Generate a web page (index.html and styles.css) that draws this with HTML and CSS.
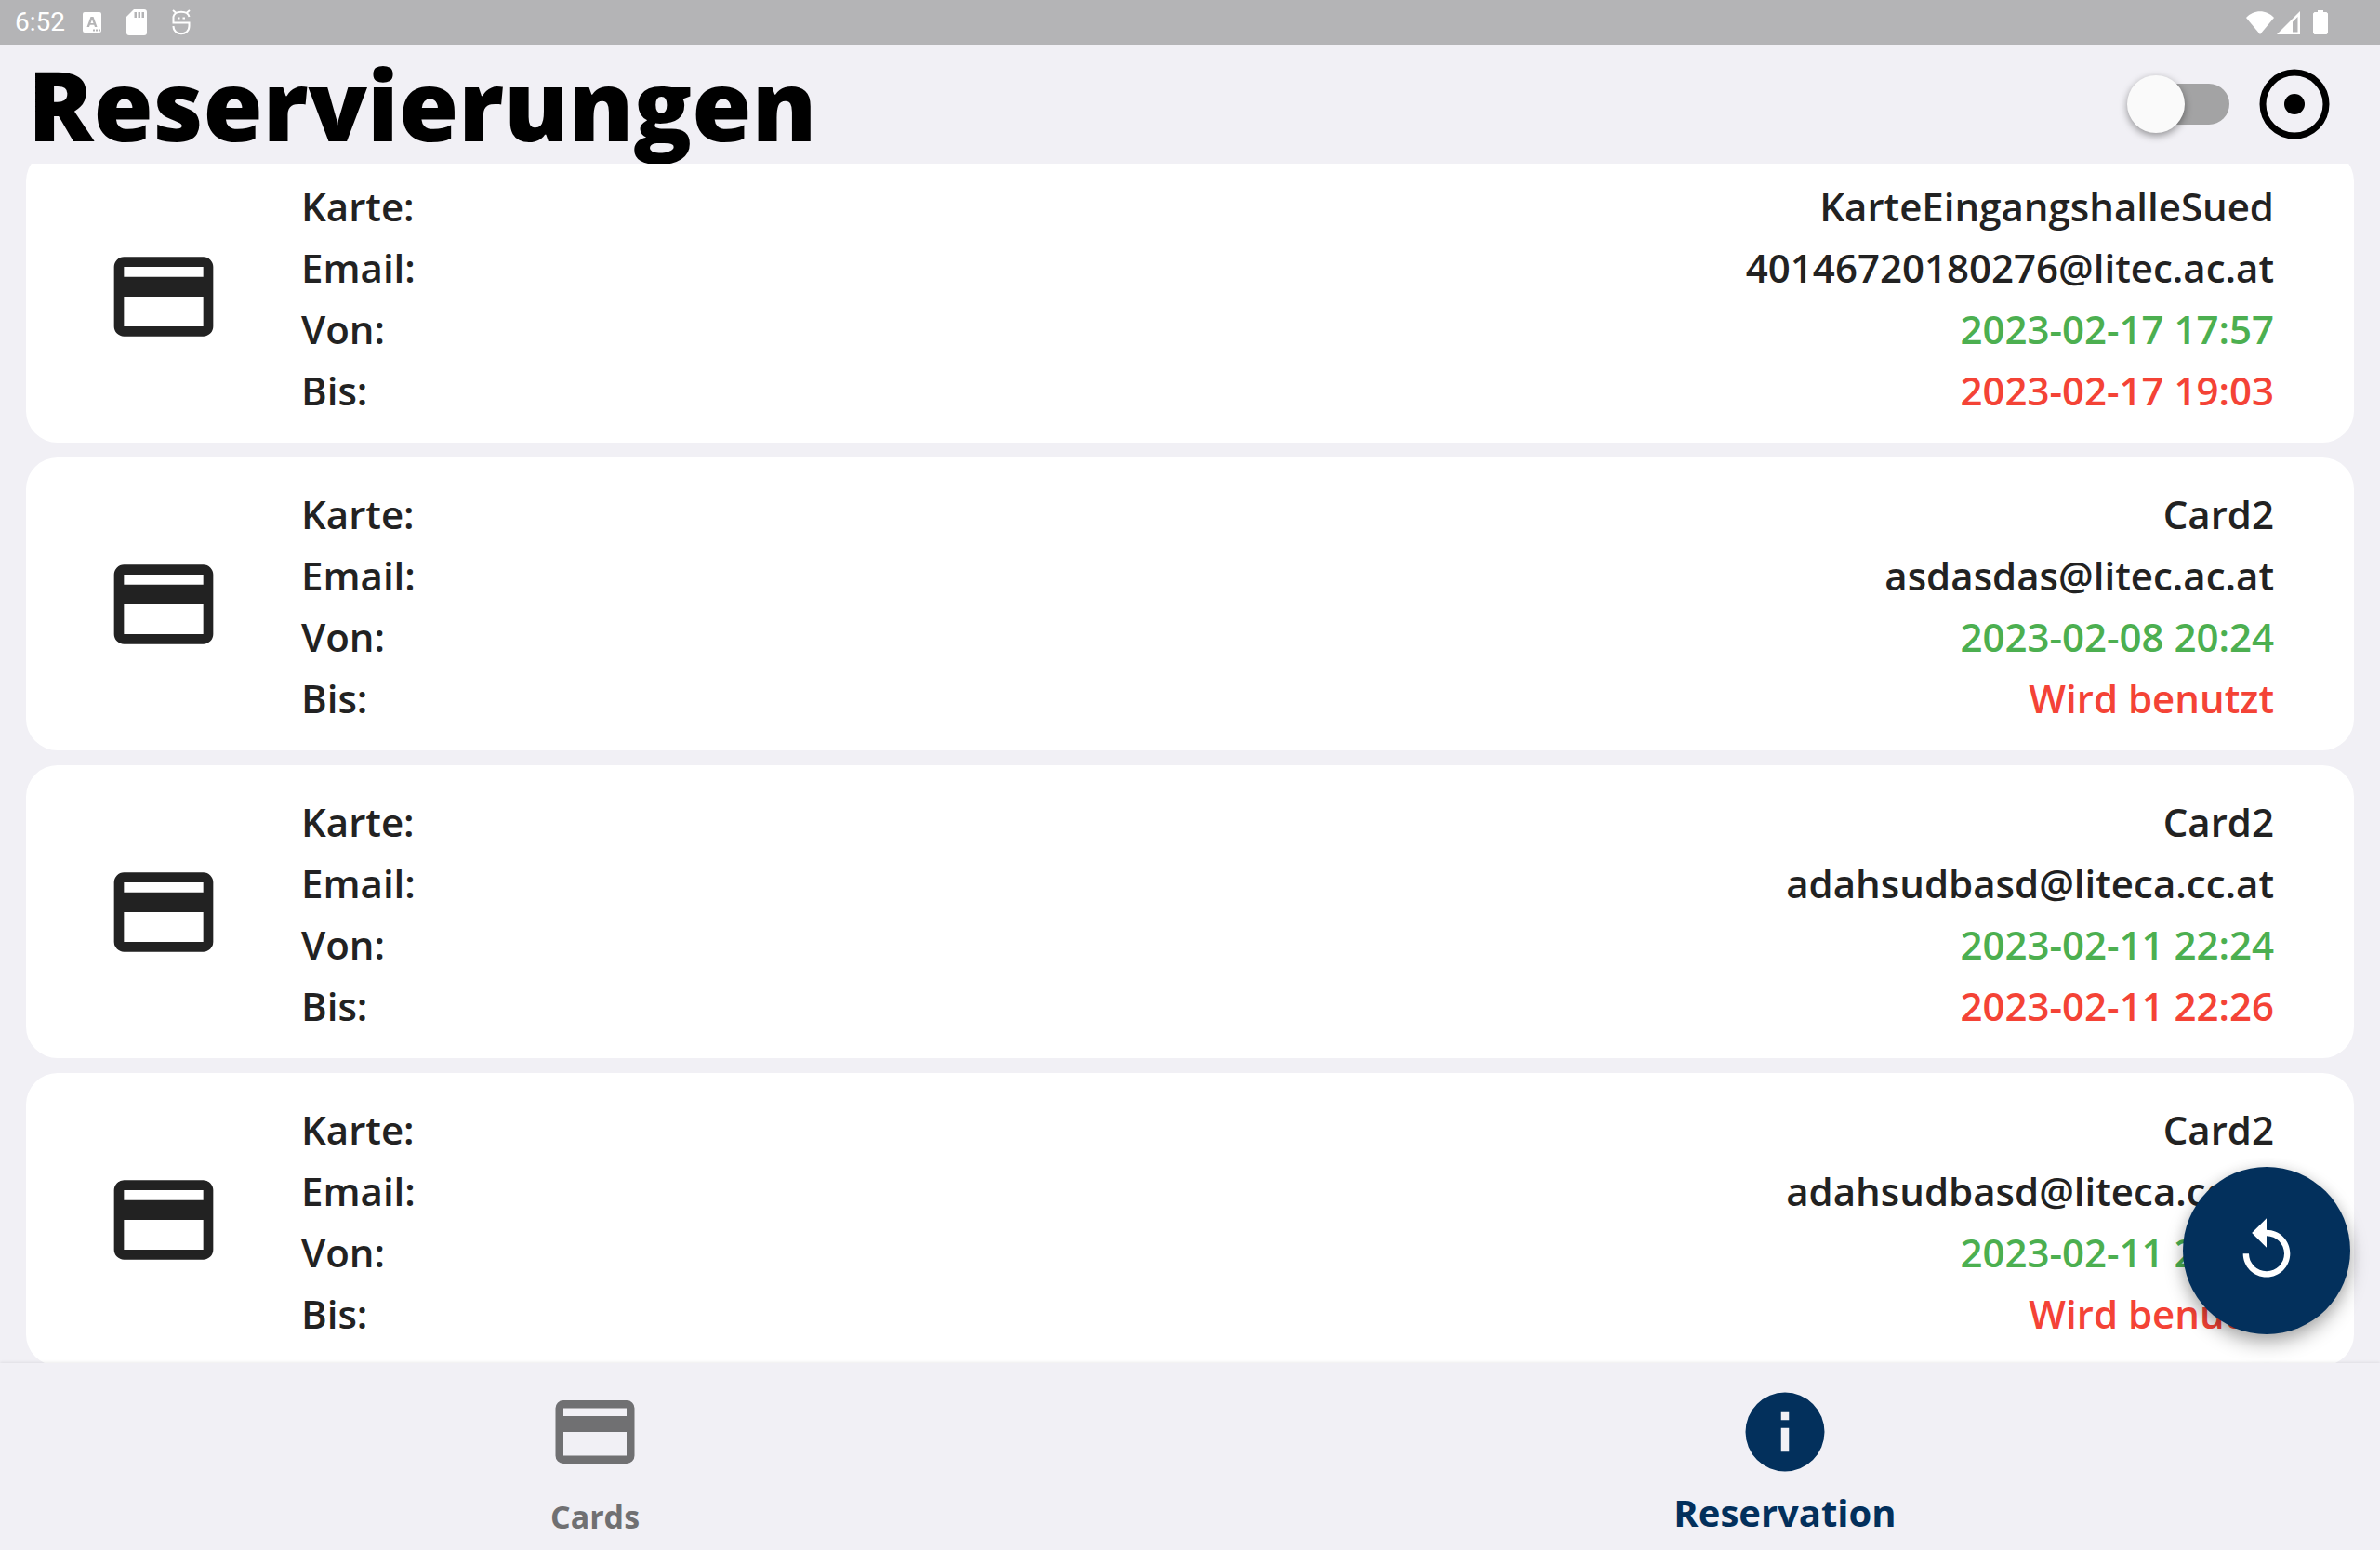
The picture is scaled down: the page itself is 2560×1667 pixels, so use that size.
FILE: index.html
```html
<!DOCTYPE html>
<html lang="de">
<head>
<meta charset="utf-8">
<meta name="viewport" content="width=device-width, initial-scale=1">
<title>Reservierungen</title>
<link rel="stylesheet" href="styles.css">
</head>
<body>
<svg class="sprite" aria-hidden="true">
  <symbol id="card" viewBox="0 0 24 24"><path d="M4 4h16a2 2 0 0 1 2 2v12a2 2 0 0 1-2 2H4a2 2 0 0 1-2-2V6a2 2 0 0 1 2-2zM4 6v2h16V6zM4 12v6h16v-6z" fill-rule="evenodd"/></symbol>
</svg>
<div class="status-bar">
  <div class="status-group">
    <span class="clock">6:52</span>
    <svg class="keyboard" viewBox="0 0 20 22"><path fill-rule="evenodd" d="M2 0h16a2 2 0 0 1 2 2v18a2 2 0 0 1-2 2H2a2 2 0 0 1-2-2V2a2 2 0 0 1 2-2zM8.500 5 4.500 16H7l.8-2.300h4.400L13 16h2.500l-4-11zM10 8l1.500 4h-3zM11 18.500v2h2v-2zm3 0v2h2v-2zm3 0v2h2v-2z"/></svg>
    <svg class="sd" viewBox="0 0 22 28"><path fill-rule="evenodd" d="M8 0h11a3 3 0 0 1 3 3v22a3 3 0 0 1-3 3H3a3 3 0 0 1-3-3V8zM8.500 3v6H11V3zm4 0v6H15V3zm4 0v6H19V3z"/></svg>
    <svg class="debug" viewBox="0 0 20 28"><path d="M1 1l3.500 3M19 1l-3.500 3M18.500 8C17 1 3 1 1.500 8v6.500h17V18c0 11-17 11-17 0"/><path d="M6 9.500h2.500M11.500 9.500H14"/></svg>
  </div>
  <div class="status-group">
    <svg class="wifi" viewBox="0 0 30 25"><path d="M0 7C8-2 22-2 30 7L15 25z"/></svg>
    <svg class="signal" viewBox="0 0 25 25"><path fill-rule="evenodd" d="M25 0v25H0zM22.500 6 17 11.500V22.500h5.500z"/></svg>
    <svg class="battery" viewBox="0 0 16 26"><path d="M5 0h6v2h3.500L16 3.500v21L14.500 26h-13L0 24.500v-21L1.500 2H5z"/></svg>
  </div>
</div>

<header class="app-header">
  <h1>Reservierungen</h1>
  <div class="header-actions">
    <input class="switch" type="checkbox" role="switch" aria-label="Filter">
    <button class="icon-button" type="button" aria-label="Ansicht">
      <svg viewBox="0 0 76 76"><circle class="ring" cx="38" cy="38" r="34"/><circle cx="38" cy="38" r="11"/></svg>
    </button>
  </div>
</header>

<main class="content">
  <ul class="reservations">
    <li class="reservation">
      <svg class="card-icon"><use href="#card"/></svg>
      <dl>
        <div><dt>Karte:</dt><dd>KarteEingangshalleSued</dd></div>
        <div><dt>Email:</dt><dd>40146720180276@litec.ac.at</dd></div>
        <div><dt>Von:</dt><dd class="from">2023-02-17 17:57</dd></div>
        <div><dt>Bis:</dt><dd class="until">2023-02-17 19:03</dd></div>
      </dl>
    </li>
    <li class="reservation">
      <svg class="card-icon"><use href="#card"/></svg>
      <dl>
        <div><dt>Karte:</dt><dd>Card2</dd></div>
        <div><dt>Email:</dt><dd>asdasdas@litec.ac.at</dd></div>
        <div><dt>Von:</dt><dd class="from">2023-02-08 20:24</dd></div>
        <div><dt>Bis:</dt><dd class="until">Wird benutzt</dd></div>
      </dl>
    </li>
    <li class="reservation">
      <svg class="card-icon"><use href="#card"/></svg>
      <dl>
        <div><dt>Karte:</dt><dd>Card2</dd></div>
        <div><dt>Email:</dt><dd>adahsudbasd@liteca.cc.at</dd></div>
        <div><dt>Von:</dt><dd class="from">2023-02-11 22:24</dd></div>
        <div><dt>Bis:</dt><dd class="until">2023-02-11 22:26</dd></div>
      </dl>
    </li>
    <li class="reservation">
      <svg class="card-icon"><use href="#card"/></svg>
      <dl>
        <div><dt>Karte:</dt><dd>Card2</dd></div>
        <div><dt>Email:</dt><dd>adahsudbasd@liteca.cc.at</dd></div>
        <div><dt>Von:</dt><dd class="from">2023-02-11 22:23</dd></div>
        <div><dt>Bis:</dt><dd class="until">Wird benutzt</dd></div>
      </dl>
    </li>
  </ul>
  <button class="fab" type="button" aria-label="Neu laden">
    <svg viewBox="0 0 24 24"><path d="M12 5V1L7 6l5 5V7c3.310 0 6 2.690 6 6s-2.690 6-6 6-6-2.690-6-6H4c0 4.420 3.580 8 8 8s8-3.580 8-8-3.580-8-8-8z"/></svg>
  </button>
</main>

<nav class="tabs">
  <a class="tab" href="#cards"><svg><use href="#card"/></svg><span>Cards</span></a>
  <a class="tab active" href="#reservation" aria-current="page">
    <svg viewBox="0 0 24 24"><path fill-rule="evenodd" d="M12 2a10 10 0 1 0 0 20 10 10 0 0 0 0-20zm-1 5h2v2h-2zm0 4h2v6h-2z"/></svg>
    <span>Reservation</span>
  </a>
</nav>
</body>
</html>
```
FILE: styles.css
```css
* {
  box-sizing: border-box;
}

body {
  display: flex;
  flex-direction: column;
  height: 100vh;
  margin: 0;
  background: #f1f0f5;
  color: #222;
  font-family: "Open Sans", "Noto Sans", sans-serif;
  font-size: 42px;
  font-weight: 600;
}

svg {
  display: block;
  flex: none;
  fill: currentColor;
}

button {
  padding: 0;
  border: 0;
  cursor: pointer;
}

.sprite {
  position: absolute;
  width: 0;
  height: 0;
}

.status-bar {
  display: flex;
  flex: none;
  align-items: center;
  justify-content: space-between;
  height: 48px;
  padding: 0 56px 0 16px;
  background: #b4b4b6;
  color: #fff;
}

.status-group {
  display: flex;
  align-items: center;
}

.clock {
  font: 400 28px/48px Roboto, sans-serif;
}

.keyboard {
  width: 20px;
  height: 22px;
  margin-left: 19px;
}

.sd {
  width: 22px;
  height: 28px;
  margin-left: 27px;
}

.debug {
  width: 20px;
  height: 28px;
  margin-left: 27px;
  fill: none;
  stroke: #fff;
  stroke-width: 2px;
}

.wifi {
  width: 30px;
  height: 25px;
}

.signal {
  width: 25px;
  height: 25px;
  margin-left: 3px;
}

.battery {
  width: 16px;
  height: 26px;
  margin-left: 14px;
}

.app-header {
  display: flex;
  flex: none;
  align-items: center;
  justify-content: space-between;
  height: 128px;
  padding: 0 54px 0 30px;
  color: #000;
}

h1 {
  margin: 0;
  font-size: 104px;
  font-weight: 800;
  line-height: 128px;
}

.header-actions {
  display: flex;
  align-items: center;
  gap: 32px;
}

.switch {
  display: flex;
  align-items: center;
  width: 104px;
  height: 44px;
  margin: 0;
  border-radius: 22px;
  background: #a3a3a4;
  appearance: none;
  cursor: pointer;
}

.switch::before {
  flex: none;
  width: 62px;
  height: 62px;
  margin-left: -6px;
  border-radius: 50%;
  background: #fafafa;
  box-shadow: 0 3px 8px rgba(0, 0, 0, 0.4);
  content: "";
}

.switch:checked {
  justify-content: flex-end;
}

.icon-button {
  width: 76px;
  height: 76px;
  background: none;
}

.ring {
  fill: none;
  stroke: #000;
  stroke-width: 7px;
}

.content {
  position: relative;
  flex: 1;
  min-height: 0;
  overflow: hidden;
}

.reservations {
  display: flex;
  flex-direction: column;
  gap: 16px;
  margin: -15px 28px 0;
  padding: 0;
  list-style: none;
}

.reservation {
  display: flex;
  align-items: center;
  gap: 84px;
  padding: 0 86px 0 84px;
  border-radius: 34px;
  background: #fff;
}

.card-icon {
  width: 128px;
  height: 128px;
}

dl {
  flex: 1;
  margin: 0;
  padding: 28px 0 23px;
}

dl div {
  display: flex;
  justify-content: space-between;
  line-height: 66px;
}

dd {
  margin: 0;
}

.from {
  color: #4caf50;
}

.until {
  color: #f44336;
}

.fab {
  position: absolute;
  right: 32px;
  bottom: 31px;
  display: grid;
  place-items: center;
  width: 180px;
  height: 180px;
  border-radius: 50%;
  background: #03305c;
  box-shadow: 0 10px 20px rgba(0, 0, 0, 0.28), 0 2px 14px rgba(0, 0, 0, 0.12);
  color: #fff;
}

.fab svg {
  width: 76px;
  height: 76px;
}

.tabs {
  z-index: 1;
  display: flex;
  flex: none;
  height: 201px;
  background: #f1f0f5;
  box-shadow: 0 -1px 3px rgba(0, 0, 0, 0.08);
}

.tab {
  display: flex;
  flex: 1;
  flex-direction: column;
  align-items: center;
  padding-top: 23px;
  color: #707072;
  font-size: 34px;
  font-weight: 700;
  line-height: 80px;
  text-decoration: none;
}

.tab svg {
  width: 102px;
  height: 102px;
}

.active {
  color: #03305c;
  font-size: 40px;
  line-height: 72px;
}
```
